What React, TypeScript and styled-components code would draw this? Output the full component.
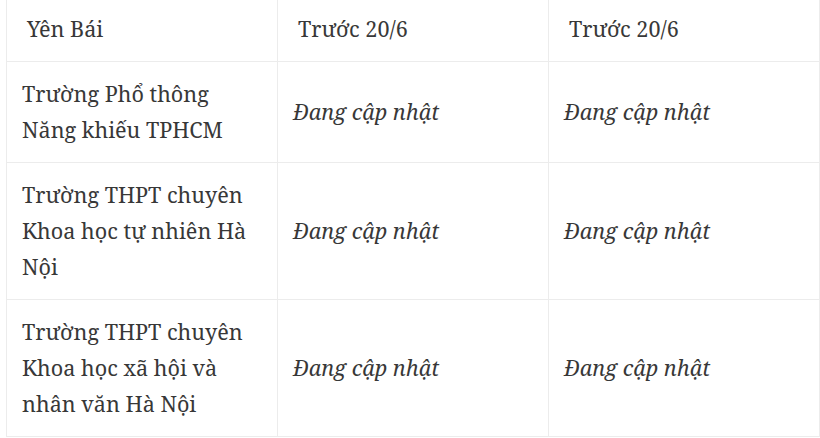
import React from "react";
import styled, { createGlobalStyle } from "styled-components";

const GlobalStyle = createGlobalStyle`
  html, body {
    margin: 0;
    padding: 0;
    background: #ffffff;
  }
  body {
    font-family: "Noto Serif", "DejaVu Serif", "Liberation Serif", serif;
    color: #333333;
  }
`;

const Wrapper = styled.div`
  padding-left: 6px;
  margin-top: -4px;
  width: 814px;
`;

const Table = styled.table`
  width: 100%;
  border-collapse: collapse;
  table-layout: fixed;
`;

const Cell = styled.td<{ $head?: boolean }>`
  border: 1.5px solid #ececec;
  padding: 14px 22px 14px ${(p) => (p.$head ? "20px" : "15px")};
  font-size: 21.6px;
  line-height: 36px;
  vertical-align: middle;
  color: #383838;
`;

const Pending = styled.em`
  font-style: italic;
`;

const rows = [
  "Trường Phổ thông Năng khiếu TPHCM",
  "Trường THPT chuyên Khoa học tự nhiên Hà Nội",
  "Trường THPT chuyên Khoa học xã hội và nhân văn Hà Nội",
];

const App = () => (
  <>
    <GlobalStyle />
    <Wrapper>
      <Table>
        <tbody>
          <tr>
            <Cell $head>Yên Bái</Cell>
            <Cell $head>Trước 20/6</Cell>
            <Cell $head>Trước 20/6</Cell>
          </tr>
          {rows.map((name) => (
            <tr key={name}>
              <Cell>{name}</Cell>
              <Cell>
                <Pending>Đang cập nhật</Pending>
              </Cell>
              <Cell>
                <Pending>Đang cập nhật</Pending>
              </Cell>
            </tr>
          ))}
        </tbody>
      </Table>
    </Wrapper>
  </>
);

export default App;
